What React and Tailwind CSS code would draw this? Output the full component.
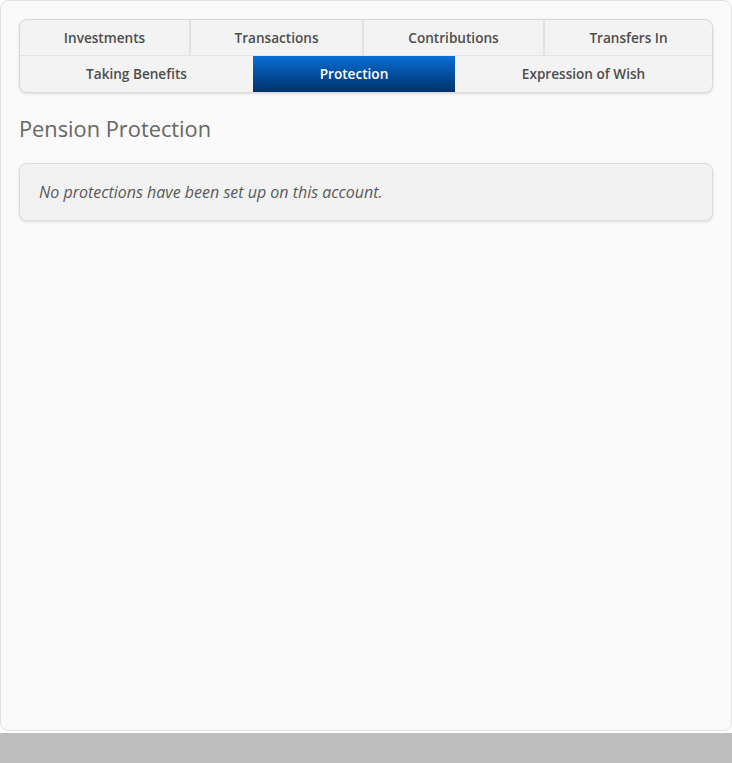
export default function App() {
  const font = { fontFamily: '"Open Sans", "Noto Sans", sans-serif' };
  const row1 = [
    ["Investments", "w-[171px]"],
    ["Transactions", "w-[173px]"],
    ["Contributions", "w-[181px]"],
    ["Transfers In", "flex-1"],
  ];
  return (
    <div className="w-[732px] h-[763px] bg-white flex flex-col" style={font}>
      <div className="h-[731px] bg-[#fafafa] border border-[#e2e2e2] rounded-[8px] px-[18px] pt-[18px] flex flex-col">
        <div className="border border-[#dadada] rounded-[8px] overflow-hidden shadow-[0_1px_3px_rgba(0,0,0,0.12)] bg-[#f3f3f3]">
          <div className="flex h-[36px] border-b border-[#e4e4e4]">
            {row1.map(([t, w], i) => (
              <div
                key={t}
                className={`${w} flex items-center justify-center pt-[2px] text-[13.6px] font-semibold text-[#4d4d4d] ${i < 3 ? "border-r-2 border-[#e2e2e2]" : ""}`}
              >
                {t}
              </div>
            ))}
          </div>
          <div className="flex h-[36px]">
            <div className="w-[233px] flex items-center justify-center text-[13.6px] font-semibold text-[#4d4d4d]">
              Taking Benefits
            </div>
            <div className="w-[202px] flex items-center justify-center text-[13.6px] font-semibold text-white bg-gradient-to-b from-[#0b6fd6] to-[#00316a]">
              Protection
            </div>
            <div className="flex-1 flex items-center justify-center text-[13.6px] font-semibold text-[#4d4d4d]">
              Expression of Wish
            </div>
          </div>
        </div>
        <h1 className="mt-[21px] text-[21.8px] leading-[30px] text-[#666] font-normal">Pension Protection</h1>
        <div className="mt-[19px] h-[58px] border border-[#dcdcdc] rounded-[8px] bg-[#f2f2f2] shadow-[0_1px_3px_rgba(0,0,0,0.12)] flex items-center pl-[19px] pr-[18px]">
          <span className="italic text-[16px] text-[#595959]">
            No protections have been set up on this account.
          </span>
        </div>
      </div>
      <div className="mt-[2px] flex-1 bg-[#bebebe]" />
    </div>
  );
}
